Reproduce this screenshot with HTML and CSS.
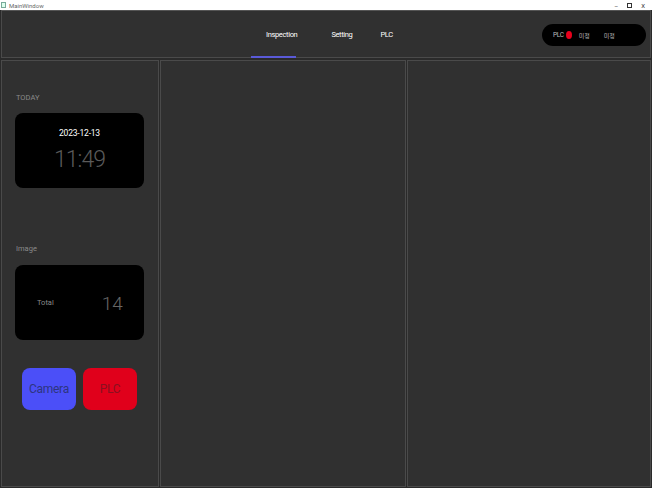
FILE: index.html
```html
<!DOCTYPE html>
<html>
<head>
<meta charset="utf-8">
<link rel="stylesheet" href="styles.css">
</head>
<body>
<div class="titlebar">
  <div class="tb-left"><span class="tb-icon"></span><span class="tb-title">MainWindow</span></div>
  <div class="tb-ctrls"><span>&#8211;</span><span class="restore"></span><span>X</span></div>
</div>
<div class="app">
  <header class="header">
    <nav class="nav">
      <div class="tab active">Inspection</div>
      <div class="tab">Setting</div>
      <div class="tab">PLC</div>
    </nav>
    <div class="status">
      <span class="st-label">PLC</span>
      <span class="dot"></span>
      <span class="st-val">미정</span>
      <span class="st-val">미정</span>
    </div>
  </header>
  <main class="main">
    <section class="panel left">
      <div class="label today">TODAY</div>
      <div class="card clock">
        <div class="date">2023-12-13</div>
        <div class="time">11:49</div>
      </div>
      <div class="label image">Image</div>
      <div class="card count">
        <span class="total">Total</span>
        <span class="num">14</span>
      </div>
      <div class="buttons">
        <div class="btn camera">Camera</div>
        <div class="btn plc">PLC</div>
      </div>
    </section>
    <section class="panel mid"></section>
    <section class="panel right"></section>
  </main>
</div>
</body>
</html>
```
FILE: styles.css
```css
* { box-sizing: border-box; }
html, body { margin: 0; padding: 0; }
body {
  width: 652px; height: 488px; overflow: hidden;
  background: #2a2a2a;
  font-family: "Roboto", "Noto Sans CJK KR", sans-serif;
  color: #fff;
}
.titlebar {
  height: 10px; background: #fff; display: flex; justify-content: space-between; align-items: center;
  color: #444; font-size: 6px;
}
.tb-left { display: flex; align-items: center; gap: 3px; padding-left: 1px; }
.tb-icon { width: 5px; height: 6px; border: 1px solid #7a9; background: #dfe; }
.tb-title { color: #666; font-size: 6px; }
.tb-ctrls { display: flex; gap: 9px; padding-right: 7px; font-size: 6px; color: #333; align-items: center; }
.restore { width: 5px; height: 5px; border: 1px solid #333; }
.app { height: 478px; display: flex; flex-direction: column; padding: 0 1px 1px 1px; }
.header {
  height: 48px; background: #303030; border: 1px solid #4a4a4a; border-top-color: #555;
  position: relative; display: flex; align-items: center;
}
.nav { position: absolute; left: 264px; top: 0; bottom: 0; display: flex; }
.tab {
  font-size: 7.5px; letter-spacing: -0.35px; color: #fff; height: 100%;
  display: flex; align-items: center; position: relative;
}
.tab:nth-child(2) { margin-left: 34px; }
.tab:nth-child(3) { margin-left: 28px; }
.tab.active::after {
  content: ""; position: absolute; left: -15px; width: 45px; bottom: -1px; height: 2px; background: #5a5ad8;
}
.status {
  position: absolute; left: 540px; top: 13px; width: 104px; height: 22px; background: #000;
  border-radius: 11px; display: flex; align-items: center; padding-left: 11px;
  font-size: 6.5px; color: #bbb;
}
.st-label { letter-spacing: -0.3px; }
.dot { width: 6px; height: 8px; border-radius: 50%; background: #e8001c; margin-left: 2px; }
.st-val { margin-left: 7px; font-size: 6px; }
.st-val + .st-val { margin-left: 14px; }
.main { flex: 1; display: flex; gap: 1px; margin-top: 2px; }
.panel { background: #303030; border: 1px solid #4a4a4a; }
.left { width: 158px; padding: 0 13px; display: flex; flex-direction: column; }
.mid { width: 246px; }
.right { flex: 1; }
.label { font-size: 7.5px; color: #8a8a8a; padding-left: 1px; }
.today { margin-top: 32px; }
.card { background: #000; border-radius: 8px; width: 129px; height: 75px; }
.clock { margin-top: 11px; display: flex; flex-direction: column; align-items: center; }
.date { margin-top: 15px; font-size: 8.5px; color: #fff; letter-spacing: -0.2px; }
.time { margin-top: 8px; font-size: 23px; font-weight: 300; color: #5a5a5a; letter-spacing: -1px; }
.image { margin-top: 56px; }
.count { margin-top: 12px; display: flex; align-items: center; }
.total { margin-left: 22px; margin-top: 0; font-size: 7.5px; color: #8a8a8a; }
.num { margin-left: 48px; font-size: 19px; color: #666; font-weight: 300; margin-top: 2px; }
.buttons { display: flex; gap: 7px; margin-top: 28px; padding-left: 7px; }
.btn {
  width: 54px; height: 42px; border-radius: 8px; display: flex; align-items: center; justify-content: center;
  font-size: 12px; letter-spacing: -0.3px;
}
.camera { background: #4b4ff8; color: #2d3580; }
.plc { background: #e0001b; color: #8a1020; }
```
